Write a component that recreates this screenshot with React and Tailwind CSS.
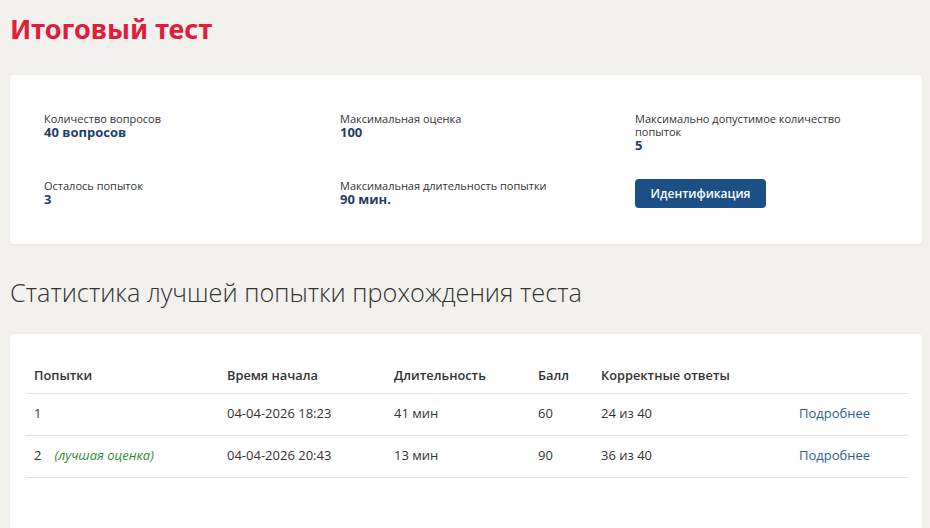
import React from "react";

const info = [
  { label: "Количество вопросов", value: "40 вопросов" },
  { label: "Максимальная оценка", value: "100" },
  { label: "Максимально допустимое количество попыток", value: "5" },
  { label: "Осталось попыток", value: "3" },
  { label: "Максимальная длительность попытки", value: "90 мин." },
];

const attempts = [
  { n: 1, best: false, start: "04-04-2026 18:23", dur: "41 мин", score: 60, correct: "24 из 40" },
  { n: 2, best: true, start: "04-04-2026 20:43", dur: "13 мин", score: 90, correct: "36 из 40" },
];

function InfoItem({ label, value }) {
  return (
    <div className="max-w-[236px]">
      <div className="text-[11px] leading-[13px] text-[#333]">{label}</div>
      <div className="text-[13px] leading-[15px] font-bold text-[#1d3f6b]">{value}</div>
    </div>
  );
}

export default function App() {
  return (
    <div className="h-[528px] overflow-hidden bg-[#f2f1ee] px-[10px] pt-[13px] font-['Open_Sans',sans-serif] text-[#333]">
      <h1 className="text-[27px] leading-[32px] font-bold text-[#e21d3c] font-['Noto_Sans',sans-serif]">
        Итоговый тест
      </h1>

      <div className="mt-[30px] w-[912px] rounded bg-white shadow-[0_1px_3px_rgba(0,0,0,0.06)] pl-[34px] pr-6 pt-[37px] pb-[36px]">
        <div className="grid grid-cols-[296px_295px_1fr] gap-y-[26px]">
          <InfoItem {...info[0]} />
          <InfoItem {...info[1]} />
          <InfoItem {...info[2]} />
          <InfoItem {...info[3]} />
          <InfoItem {...info[4]} />
          <div>
            <button className="h-[29px] w-[131px] rounded bg-[#1c4f86] text-[12px] font-semibold text-white">
              Идентификация
            </button>
          </div>
        </div>
      </div>

      <h2 className="mt-[33px] text-[25.3px] leading-[31px] font-light text-[#333] font-['Open_Sans',sans-serif]">
        Статистика лучшей попытки прохождения теста
      </h2>

      <div className="mt-[26px] w-[912px] rounded-t bg-white shadow-[0_1px_3px_rgba(0,0,0,0.06)] px-4 pt-[25px] pb-16">
        <table className="w-[882px] table-fixed border-collapse text-[13px] text-[#333]">
          <colgroup>
            <col className="w-[193px]" />
            <col className="w-[167px]" />
            <col className="w-[144px]" />
            <col className="w-[63px]" />
            <col className="w-[198px]" />
            <col />
          </colgroup>
          <thead>
            <tr className="border-b border-[#e3e3e3]">
              <th className="h-[34px] pl-2 text-left text-[12.8px] font-semibold">Попытки</th>
              <th className="pl-2 text-left text-[12.8px] font-semibold">Время начала</th>
              <th className="pl-2 text-left text-[12.8px] font-semibold">Длительность</th>
              <th className="pl-2 text-left text-[12.8px] font-semibold">Балл</th>
              <th className="pl-2 text-left text-[12.8px] font-semibold">Корректные ответы</th>
              <th />
            </tr>
          </thead>
          <tbody>
            {attempts.map((a) => (
              <tr key={a.n} className="border-b border-[#e3e3e3]">
                <td className="h-[42px] pl-2">
                  {a.n}
                  {a.best && (
                    <span className="ml-[13px] text-[13px] italic text-[#2e8b2e]">(лучшая оценка)</span>
                  )}
                </td>
                <td className="pl-2">{a.start}</td>
                <td className="pl-2">{a.dur}</td>
                <td className="pl-2">{a.score}</td>
                <td className="pl-2">{a.correct}</td>
                <td className="pl-2">
                  <a href="#" className="text-[#2f5f8e]">Подробнее</a>
                </td>
              </tr>
            ))}
          </tbody>
        </table>
      </div>
    </div>
  );
}
